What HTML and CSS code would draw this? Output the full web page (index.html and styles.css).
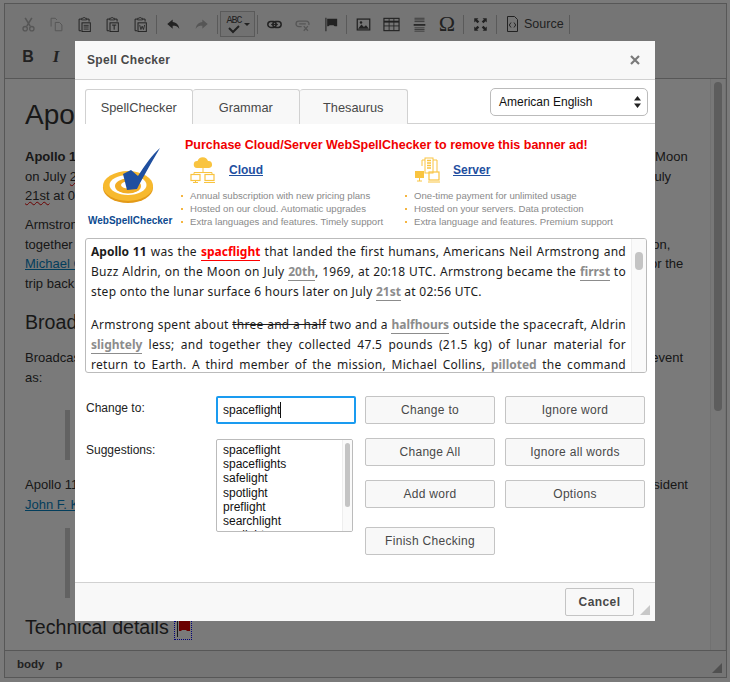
FILE: index.html
```html
<!DOCTYPE html>
<html lang="en">
<head>
<meta charset="utf-8">
<title>Spell Checker</title>
<link rel="stylesheet" href="styles.css">
</head>
<body>
<div class="editor">
  <div class="toolbar">
    <div class="tb-row">
      <span class="btn off"><svg viewBox="0 0 18 18"><path d="M5 1l6 10M13 1L7 11" fill="none" stroke="currentColor" stroke-width="2"/><circle cx="5" cy="14" r="2.6" fill="none" stroke="currentColor" stroke-width="1.6"/><circle cx="13" cy="14" r="2.6" fill="none" stroke="currentColor" stroke-width="1.6"/></svg></span>
      <span class="btn off"><svg viewBox="0 0 18 18"><path d="M2.500 11.500V1.500h5l2 2M7.500 6.500h5l3 3v7h-8z" fill="none" stroke="currentColor" stroke-width="1.200"/></svg></span>
      <span class="btn"><svg viewBox="0 0 18 18"><path d="M5 2.500H2.500v14H5M12 2.500h2.500v3" fill="none" stroke="currentColor" stroke-width="1.200"/><path d="M5.500 3.500v-2h2l.5-1h1l.5 1h2v2z" fill="none" stroke="currentColor"/><rect x="6" y="7" width="10" height="10.500" fill="none" stroke="currentColor" stroke-width="1.200"/><path d="M8 10h6M8 12h6M8 14.500h6" stroke="currentColor"/></svg></span>
      <span class="btn"><svg viewBox="0 0 18 18"><path d="M5 2.500H2.500v14H5M12 2.500h2.500v3" fill="none" stroke="currentColor" stroke-width="1.200"/><path d="M5.500 3.500v-2h2l.5-1h1l.5 1h2v2z" fill="none" stroke="currentColor"/><rect x="6" y="7" width="10" height="10.500" fill="none" stroke="currentColor" stroke-width="1.200"/><path d="M8.500 9.700h5M11 9.700v5.500" stroke="currentColor" stroke-width="1.200"/></svg></span>
      <span class="btn"><svg viewBox="0 0 18 18"><path d="M5 2.500H2.500v14H5M12 2.500h2.500v3" fill="none" stroke="currentColor" stroke-width="1.200"/><path d="M5.500 3.500v-2h2l.5-1h1l.5 1h2v2z" fill="none" stroke="currentColor"/><rect x="6" y="7" width="10" height="10.500" fill="none" stroke="currentColor" stroke-width="1.200"/><path d="M8 9.500l1.500 5.500 1.500-4 1.500 4 1.500-5.500" fill="none" stroke="currentColor"/></svg></span>
      <span class="sep"></span>
      <span class="btn"><svg viewBox="0 0 18 18"><path d="M8 3L1.500 8.500 8 14v-3.500c3.500 0 6 .5 8 4-.5-5-3.500-8-8-8.500z" fill="currentColor"/></svg></span>
      <span class="btn off"><svg viewBox="0 0 18 18"><path d="M10 3l6.500 5.500L10 14v-3.500c-3.500 0-6 .5-8 4 .5-5 3.500-8 8-8.500z" fill="currentColor"/></svg></span>
      <span class="sep"></span>
      <span class="btn-spell"><span class="spell-icon"><span class="abc">ABC</span><svg width="16" height="9" viewBox="0 0 16 9"><path d="M3 3l4 4 6-6" fill="none" stroke="currentColor" stroke-width="2"/></svg></span><span class="caret-down"></span></span>
      <span class="sep"></span>
      <span class="btn"><svg viewBox="0 0 18 18"><rect x="1" y="5.500" width="10" height="7" rx="3.500" fill="none" stroke="currentColor" stroke-width="1.800"/><rect x="7" y="5.500" width="10" height="7" rx="3.500" fill="none" stroke="currentColor" stroke-width="1.800"/><path d="M5 9h8" stroke="currentColor" stroke-width="1.500"/></svg></span>
      <span class="btn off"><svg viewBox="0 0 18 18"><path d="M8 11.500H4.500a3.200 3.200 0 0 1 0-6.500h9a3.200 3.200 0 0 1 3 4.500M5 8.200h8" fill="none" stroke="currentColor" stroke-width="1.600"/><path d="M10.500 11l5 5.500M15.500 11l-5 5.500" stroke="currentColor" stroke-width="1.600"/></svg></span>
      <span class="btn"><svg viewBox="0 0 18 18"><path d="M3.500 1v16" stroke="currentColor" stroke-width="1.300"/><path d="M5 2h12v9h-3l-1.500-1H8l-1.500 1H5z" fill="currentColor"/></svg></span>
      <span class="sep"></span>
      <span class="btn"><svg viewBox="0 0 18 18"><rect x="1.500" y="2.500" width="15" height="13" fill="none" stroke="currentColor" stroke-width="1.500"/><path d="M2.500 14l4-5 3 3 2.500-2 3.500 4z" fill="currentColor"/><circle cx="6" cy="6.500" r="1.500" fill="currentColor"/></svg></span>
      <span class="btn table-icon"><svg viewBox="0 0 18 18"><rect x="1" y="2.500" width="16" height="13" fill="none" stroke="currentColor" stroke-width="1.200"/><path d="M1 6h16" stroke="currentColor" stroke-width="2"/><path d="M1 10.500h16M6.500 3v12M11.500 3v12" stroke="currentColor" stroke-width=".9"/></svg></span>
      <span class="btn"><svg viewBox="0 0 18 18"><path d="M3 1.500h12M3 3.500h12M3 5.500h12M3 13h12M3 15h12M3 17h12" stroke="currentColor" stroke-width=".8"/><path d="M2 9.500h14" stroke="currentColor" stroke-width="2"/></svg></span>
      <span class="btn omega">Ω</span>
      <span class="sep"></span>
      <span class="btn"><svg viewBox="0 0 18 18"><path d="M1.500 1.500h5L5 3l2.500 2.500-2 2L3 5 1.500 6.500zM16.500 1.500h-5L13 3l-2.500 2.500 2 2L15 5l1.500 1.500zM1.500 16.500h5L5 15l2.500-2.500-2-2L3 13l-1.500-1.500zM16.500 16.500h-5L13 15l-2.500-2.500 2-2L15 13l1.500-1.500z" fill="currentColor"/></svg></span>
      <span class="sep"></span>
      <span class="btn-source"><svg width="11" height="16" viewBox="0 0 11 16"><path d="M.5.500h7l3 3v12H.5z" fill="none" stroke="currentColor"/><path d="M4 6.500L2.300 9 4 11.500M7 6.500L8.700 9 7 11.500" fill="none" stroke="currentColor"/></svg><span>Source</span></span>
      <span class="sep"></span>
    </div>
    <div class="tb-row">
      <span class="btn bold">B</span>
      <span class="btn ital">I</span>
    </div>
  </div>
  <div class="content">
    <div class="doc">
      <h1>Apollo 11</h1>
      <p><b>Apollo 11</b> was the spaceflight that landed the first humans, Americans Neil Armstrong and Buzz Aldrin on the Moon<br>on July <span class="wavy">20th</span>, 1969, at 20:18 UTC. Armstrong became the first to step onto the lunar surface 6 hours later on July<br><span class="wavy">21st</span> at 02:56 UTC.</p>
      <p>Armstrong spent about two and a half hours outside the spacecraft, Aldrin slightly less; and<br>together they collected 47.5 pounds (21.5 kg) of lunar material for return to Earth. A third member of the mission,<br><a class="doc-link">Michael Collins</a>, piloted the command spacecraft alone in lunar orbit until Armstrong and Aldrin returned to it for the<br>trip back to Earth.</p>
      <h2>Broadcasting and quotes</h2>
      <p class="lead">Broadcast on live TV to a worldwide audience Armstrong stepped out on the lunar surface and described the event<br>as:</p>
      <blockquote class="bq-short">One small step for man, one giant leap for mankind.</blockquote>
      <p class="lead">Apollo 11 effectively ended the Space Race and fulfilled a national goal proposed in 1961 by the late U.S. President<br><a class="doc-link">John F. Kennedy</a> in a speech before the United States Congress:</p>
      <blockquote class="bq-tall">Before this decade is out, of landing a man on the Moon and returning him safely to the Earth.</blockquote>
      <h2>Technical details <span class="anchor"><svg width="16" height="18" viewBox="0 0 16 18"><path d="M2.500 0v16" stroke="#333" stroke-width="1"/><path d="M4 0h11v10h-3l-1-1H7l-1 1H4z" fill="#e00000"/></svg></span></h2>
    </div>
    <div class="doc-scroll"><div class="doc-thumb"></div></div>
  </div>
  <div class="pathbar"><b>body</b><b>p</b><span class="grip"></span></div>
</div>

<div class="backdrop"></div>

<div class="dialog">
  <div class="dlg-head"><span class="dlg-title">Spell Checker</span><svg class="dlg-close" width="10" height="10" viewBox="0 0 10 10"><path d="M1 1l8 8M9 1L1 9" stroke="currentColor" stroke-width="2.200"/></svg></div>
  <div class="dlg-body">
    <div class="tabbar">
      <span class="tab active">SpellChecker</span>
      <span class="tab">Grammar</span>
      <span class="tab">Thesaurus</span>
      <span class="lang">American English<svg width="7" height="12" viewBox="0 0 7 12"><path d="M3.500 0L7 4.500H0zM3.500 12L0 7.500h7z" fill="#222"/></svg></span>
    </div>
    <div class="banner">
      <div class="logo">
        <svg width="70" height="60" viewBox="0 0 70 60"><ellipse cx="31" cy="42.500" rx="25" ry="15.500" fill="#e39a18"/><ellipse cx="31" cy="41" rx="25" ry="15" fill="#f7b92e"/><ellipse cx="31" cy="40" rx="18.500" ry="10" fill="#fff"/><ellipse cx="31" cy="41" rx="13" ry="7.500" fill="#f2ad24"/><ellipse cx="31" cy="40" rx="7" ry="3.500" fill="#fff"/><path d="M26 29l8-4 7 6C48 20 55 10 63 3 56 15 46 32 40 44l-10 1z" fill="#1f4f9f"/></svg>
        <span class="logo-name">WebSpellChecker</span>
      </div>
      <div class="promo">
        <div class="promo-title">Purchase Cloud/Server WebSpellChecker to remove this banner ad!</div>
        <div class="plans">
          <div class="plan">
            <div class="plan-head"><svg width="26" height="26" viewBox="0 0 26 26"><path d="M7 11a3.500 3.500 0 0 1 .5-7A5.500 5.500 0 0 1 18 4a3.500 3.500 0 0 1 1 7z" fill="#f9c440"/><path d="M13 11v3M4 15.500h18v2M4 15.500v2M13 14v1.500" fill="none" stroke="#f9c440"/><rect x="1" y="17.500" width="9" height="6" fill="none" stroke="#f9c440" stroke-width="1.200"/><rect x="15" y="17.500" width="9" height="6" fill="none" stroke="#f9c440" stroke-width="1.200"/><path d="M5.500 23.500v2M3 25.500h5M14 25.500h11" stroke="#f9c440"/></svg><a class="plan-link">Cloud</a></div>
            <ul>
              <li>Annual subscription with new pricing plans</li>
              <li>Hosted on our cloud. Automatic upgrades</li>
              <li>Extra languages and features. Timely support</li>
            </ul>
          </div>
          <div class="plan">
            <div class="plan-head"><svg width="26" height="26" viewBox="0 0 26 26"><rect x="11" y="1" width="8" height="15" fill="#fff" stroke="#f9c440"/><path d="M13 3.500h4M13 6h4M13 8.500h4M13 11h4" stroke="#f9c440" stroke-width="1.500"/><path d="M8 9V3h3M19 3h4v12" fill="none" stroke="#f9c440"/><rect x="1" y="14" width="9" height="7" fill="#f9c440"/><rect x="15" y="15" width="10" height="8" fill="none" stroke="#f9c440" stroke-width="1.200"/><path d="M3 24h5M5.500 21v3M14 25h12" stroke="#f9c440"/></svg><a class="plan-link">Server</a></div>
            <ul>
              <li>One-time payment for unlimited usage</li>
              <li>Hosted on your servers. Data protection</li>
              <li>Extra language and features. Premium support</li>
            </ul>
          </div>
        </div>
      </div>
    </div>
    <div class="checkbox">
      <div class="check-text">
        <div class="jl"><b>Apollo 11</b> was the <span class="err">spacflight</span> that landed the first humans, Americans Neil Armstrong and</div>
        <div class="jl">Buzz Aldrin, on the Moon on July <span class="gram">20th</span>, 1969, at 20:18 UTC. Armstrong became the <span class="gram">firrst</span> to</div>
        <div class="nl">step onto the lunar surface 6 hours later on July <span class="gram">21st</span> at 02:56 UTC.</div>
        <div class="jl para">Armstrong spent about <s>three and a half</s> two and a <span class="gram">halfhours</span> outside the spacecraft, Aldrin</div>
        <div class="jl"><span class="gram">slightely</span> less; and together they collected 47.5 pounds (21.5 kg) of lunar material for</div>
        <div class="jl">return to Earth. A third member of the mission, Michael Collins, <span class="gram plain">pilloted</span> the command</div>
      </div>
      <div class="check-scroll"><div class="check-thumb"></div></div>
    </div>
    <div class="form">
      <label class="f-label">Change to:</label>
      <div class="f-input"><span class="typed">spaceflight</span></div>
      <button class="f-btn">Change to</button>
      <button class="f-btn wide">Ignore word</button>
      <label class="f-label">Suggestions:</label>
      <div class="f-list">
        <div class="f-items">
          <div>spaceflight</div><div>spaceflights</div><div>safelight</div><div>spotlight</div><div>preflight</div><div>searchlight</div><div>sunlight</div>
        </div>
        <div class="f-scroll"><div class="f-thumb"></div></div>
      </div>
      <button class="f-btn">Change All</button>
      <button class="f-btn wide">Ignore all words</button>
      <button class="f-btn c3">Add word</button>
      <button class="f-btn wide">Options</button>
      <button class="f-btn c3 finish">Finish Checking</button>
    </div>
  </div>
  <div class="dlg-foot"><button class="cancel">Cancel</button><span class="dlg-grip"></span></div>
</div>
</body>
</html>
```
FILE: styles.css
```css
* { box-sizing: border-box; }
html, body { margin: 0; padding: 0; }
body { width: 730px; height: 682px; overflow: hidden; background: #fff; font-family: "Liberation Sans", Arial, sans-serif; color: #333; }

.editor { margin: 3px 3px 0 4px; height: 675px; border: 1px solid #b6b6b6; display: flex; flex-direction: column; background: #fff; }
.toolbar { height: 75px; padding: 7px 0 0 9px; background: #f5f5f5; border-bottom: 1px solid #b6b6b6; flex: none; display: flex; flex-direction: column; gap: 7px; }
.tb-row { display: flex; align-items: center; height: 26px; color: #474747; }
.btn { width: 28px; height: 26px; display: flex; align-items: center; justify-content: center; color: #474747; }
.btn svg { width: 15px; height: 15px; }
.btn.table-icon svg { width: 17px; height: 17px; }
.btn.off { color: #b4b4b4; }
.sep { width: 1px; height: 19px; background: #bcbcbc; margin: 0 2px; }
.btn-spell { width: 35px; height: 26px; border: 1px solid #bcbcbc; background: #ededed; display: flex; align-items: center; justify-content: center; gap: 1px; }
.spell-icon { display: flex; flex-direction: column; align-items: center; width: 18px; }
.abc { font-family: "Liberation Mono", monospace; font-size: 10px; line-height: 9px; height: 9px; letter-spacing: -1px; margin-top: 1px; }
.caret-down { width: 0; height: 0; border-left: 3px solid transparent; border-right: 3px solid transparent; border-top: 3px solid #474747; }
.omega { font-family: "Liberation Serif", serif; font-size: 22px; }
.btn-source { display: flex; align-items: center; gap: 6px; padding-left: 8px; width: 68px; font-size: 12.500px; }
.bold { font-weight: bold; font-size: 16px; }
.ital { font-family: "Liberation Serif", serif; font-style: italic; font-weight: bold; font-size: 17px; }

.content { flex: 1; display: flex; min-height: 0; }
.doc { flex: 1; min-width: 0; overflow: hidden; padding: 18px 0 0 20px; font-size: 13px; line-height: 19.5px; color: #333; white-space: nowrap; }
.doc h1 { font-weight: normal; font-size: 28px; line-height: 35px; margin: 0 0 15px; }
.doc h2 { font-weight: normal; font-size: 19.600px; line-height: 25px; margin: 17px 0 13px; }
.doc p { margin: 0 0 9.75px; }
.doc p.lead { margin: 0; }
.wavy { text-decoration: underline wavy #e00000; text-decoration-thickness: 1px; }
.doc-link { color: #0782c1; text-decoration: underline; }
.doc blockquote { margin: 14px 0 13px 40px; padding-left: 16px; border-left: 5px solid #ccc; overflow: hidden; font-style: italic; }
.doc .bq-short { height: 50px; margin: 23px 0 15px 40px; }
.doc .bq-tall { height: 70px; }
.anchor { display: inline-flex; align-items: flex-end; vertical-align: -5px; width: 18px; height: 19px; border: 1px dotted #00f; }
.doc-scroll { width: 16px; flex: none; background: #fafafa; border-left: 1px solid #ececec; border-right: 1px solid #ececec; padding: 3px 3px; }
.doc-thumb { height: 329px; background: #c2c2c2; border-radius: 4px; }
.pathbar { flex: none; height: 27px; border-top: 1px solid #b6b6b6; background: #f5f5f5; display: flex; align-items: center; gap: 11px; padding: 0 0 0 12px; font-size: 11.500px; color: #484848; position: relative; }
.grip { position: absolute; right: 4px; bottom: 4px; width: 0; height: 0; border-left: 10px solid transparent; border-bottom: 10px solid #a8a8a8; }

.backdrop { position: fixed; inset: 0; background: rgba(0,0,0,.52); }

.dialog { position: absolute; left: 75px; top: 41px; width: 580px; height: 580px; background: #fff; display: flex; flex-direction: column; }
.dlg-head { flex: none; height: 39px; background: #f8f8f8; border-bottom: 1px solid #d1d1d1; display: flex; align-items: center; justify-content: space-between; padding: 0 15px 0 12px; }
.dlg-title { font-weight: bold; font-size: 12px; color: #484848; letter-spacing: .3px; }
.dlg-close { color: #7a7a7a; }
.dlg-body { flex: 1; min-height: 0; padding-top: 9px; }
.tabbar { height: 35px; margin-left: 10px; border-bottom: 1px solid #d1d1d1; display: flex; padding-right: 7px; }
.tab { width: 107.500px; height: 35px; background: #f8f8f8; border: 1px solid #d1d1d1; border-left-width: 0; border-bottom-width: 0; border-radius: 3px 3px 0 0; display: flex; align-items: center; justify-content: center; font-size: 12.800px; color: #484848; }
.tab.active { background: #fff; border-left-width: 1px; }
.lang { margin: -1px 0 0 auto; width: 158px; height: 28px; border: 1px solid #bbb; border-radius: 5px; display: flex; align-items: center; justify-content: space-between; padding: 0 6px 0 8px; font-size: 12px; color: #111; }

.banner { height: 114px; display: flex; padding-left: 10px; }
.logo { width: 96px; flex: none; display: flex; flex-direction: column; align-items: flex-start; padding: 21px 0 0 3px; }
.logo svg { margin-left: 9px; flex: none; }
.logo-name { font-weight: bold; font-size: 10px; color: #0d4a8f; white-space: nowrap; margin-top: 10px; line-height: 12px; }
.promo { flex: 1; padding-top: 14px; }
.promo-title { color: #f00000; font-weight: bold; font-size: 12.500px; line-height: 15px; margin-left: 4px; white-space: nowrap; }
.plans { display: flex; }
.plan { width: 224px; }
.plan-head { display: flex; align-items: center; height: 27px; padding-left: 9px; margin-top: 3px; }
.plan-link { color: #1f4f9f; font-weight: bold; font-size: 12px; text-decoration: underline; margin-left: 13px; }
.plan ul { list-style: none; margin: 6px 0 0; padding: 0; font-size: 9.600px; line-height: 13px; color: #8a8a8a; white-space: nowrap; }
.plan li { padding-left: 9px; position: relative; }
.plan li::before { content: ""; position: absolute; left: 0; top: 6px; width: 2px; height: 2px; background: #f5b642; }

.checkbox { margin: 0 8px 0 10px; height: 135px; border: 1px solid #bbb; border-radius: 3px; display: flex; overflow: hidden; }
.check-text { flex: 1; min-width: 0; padding: 3px 5px 0 5px; font-family: "Noto Sans", sans-serif; font-size: 12px; line-height: 20px; color: #1c1c1c; letter-spacing: .27px; }
.check-text b { letter-spacing: 0; }
.jl { text-align: justify; text-align-last: justify; white-space: nowrap; }
.nl { white-space: nowrap; }
.para { margin-top: 13px; }
.err { color: #f00; font-weight: bold; letter-spacing: 0; border-bottom: 1px solid #f00; }
.gram { color: #8c8c8c; font-weight: bold; letter-spacing: 0; border-bottom: 1px solid #8c8c8c; }
.gram.plain { border-bottom: 0; }
.check-scroll { width: 15px; flex: none; background: #fafafa; border-left: 1px solid #eee; padding: 13px 3px 0; }
.check-thumb { height: 18px; background: #c4c4c4; border-radius: 4px; }

.form { margin-top: 23px; margin-left: 11px; display: grid; grid-template-columns: 130px 149px 130px 150px; grid-template-rows: 28px 28px 28px 33px; row-gap: 14px; font-size: 12px; }
.f-label { color: #222; line-height: 24px; }
.f-input { width: 140px; height: 28px; border: 2px solid #1a9bf0; border-radius: 2px; display: flex; align-items: center; padding-left: 5px; color: #111; }
.typed { border-right: 1px solid #111; line-height: 16px; }
.f-list { grid-row: 2 / 5; grid-column: 2; width: 137px; height: 93px; margin-top: 1px; border: 1px solid #bbb; border-radius: 2px; display: flex; overflow: hidden; }
.f-items { flex: 1; padding: 3px 0 0 6px; line-height: 14.200px; color: #111; }
.f-scroll { width: 10px; flex: none; background: #fafafa; border-left: 1px solid #eee; padding: 3px 2px; }
.f-thumb { height: 64px; background: #c4c4c4; border-radius: 3px; }
.f-btn { width: 130px; height: 28px; background: #f8f8f8; border: 1px solid #c4c4c4; border-radius: 2px; font: 12px "Liberation Sans", Arial, sans-serif; color: #484848; letter-spacing: .3px; padding: 0; }
.f-btn.wide { width: 140px; grid-column: 4; justify-self: end; }
.c3 { grid-column: 3; }
.finish { align-self: end; }

.dlg-foot { flex: none; height: 39px; background: #f8f8f8; border-top: 1px solid #d1d1d1; display: flex; justify-content: flex-end; padding: 5px 21px 0 0; position: relative; }
.cancel { width: 69px; height: 28px; background: #f8f8f8; border: 1px solid #c4c4c4; border-radius: 2px; font: bold 12px "Liberation Sans", Arial, sans-serif; color: #484848; letter-spacing: .4px; padding: 0; }
.dlg-grip { position: absolute; right: 5px; bottom: 6px; width: 0; height: 0; border-left: 10px solid transparent; border-bottom: 10px solid #c8c8c8; }
```
